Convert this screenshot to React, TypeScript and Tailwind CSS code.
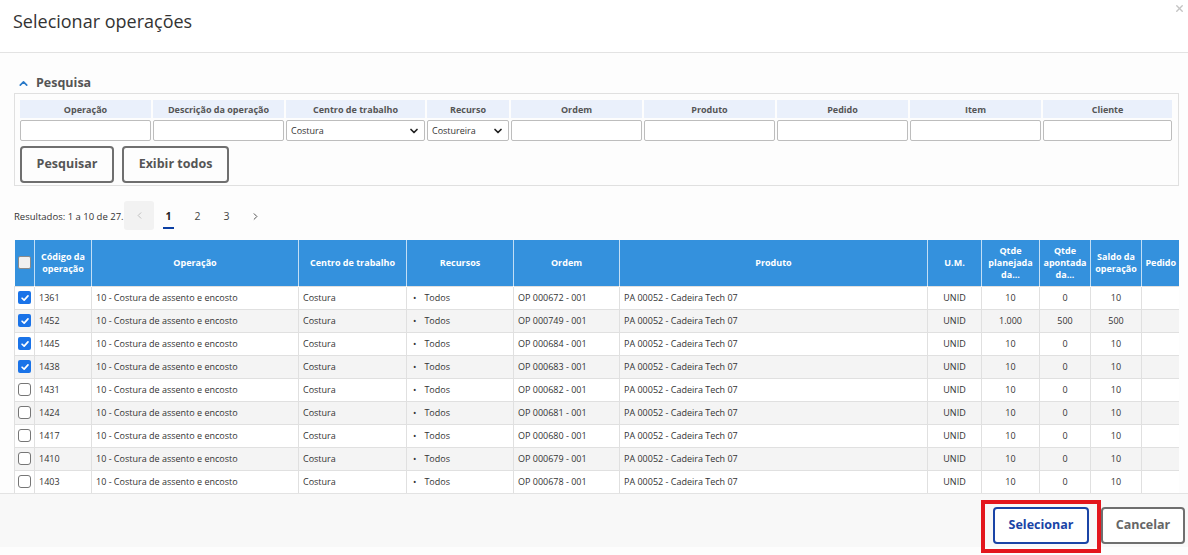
import { ChevronDown, ChevronUp, ChevronLeft, ChevronRight, X } from "lucide-react";

type Row = {
  code: string;
  order: string;
  planned: string;
  done: string;
  balance: string;
  checked: boolean;
};

const rows: Row[] = [
  { code: "1361", order: "OP 000672 - 001", planned: "10", done: "0", balance: "10", checked: true },
  { code: "1452", order: "OP 000749 - 001", planned: "1.000", done: "500", balance: "500", checked: true },
  { code: "1445", order: "OP 000684 - 001", planned: "10", done: "0", balance: "10", checked: true },
  { code: "1438", order: "OP 000683 - 001", planned: "10", done: "0", balance: "10", checked: true },
  { code: "1431", order: "OP 000682 - 001", planned: "10", done: "0", balance: "10", checked: false },
  { code: "1424", order: "OP 000681 - 001", planned: "10", done: "0", balance: "10", checked: false },
  { code: "1417", order: "OP 000680 - 001", planned: "10", done: "0", balance: "10", checked: false },
  { code: "1410", order: "OP 000679 - 001", planned: "10", done: "0", balance: "10", checked: false },
  { code: "1403", order: "OP 000678 - 001", planned: "10", done: "0", balance: "10", checked: false },
];

const filters: { label: string; width: string; select?: string }[] = [
  { label: "Operação", width: "w-[131px]" },
  { label: "Descrição da operação", width: "w-[131px]" },
  { label: "Centro de trabalho", width: "w-[139px]", select: "Costura" },
  { label: "Recurso", width: "w-[82px]", select: "Costureira" },
  { label: "Ordem", width: "w-[131px]" },
  { label: "Produto", width: "w-[131px]" },
  { label: "Pedido", width: "w-[131px]" },
  { label: "Item", width: "w-[131px]" },
  { label: "Cliente", width: "w-[129px]" },
];

const colWidths = [20, 57, 207, 108, 107, 106, 308, 54, 58, 51, 51, 38];

function Checkbox({ checked }: { checked: boolean }) {
  return checked ? (
    <span className="flex h-[13px] w-[13px] items-center justify-center rounded-[2px] bg-[#1a73e8]">
      <svg viewBox="0 0 12 12" className="h-[10px] w-[10px]" fill="none" stroke="white" strokeWidth="2" strokeLinecap="round" strokeLinejoin="round">
        <path d="M2.5 6.3 L5 8.6 L9.6 3.4" />
      </svg>
    </span>
  ) : (
    <span className="block h-[13px] w-[13px] rounded-[3px] border border-[#767676] bg-white" />
  );
}

export default function App() {
  return (
    <div className="relative flex h-[555px] w-[1188px] flex-col overflow-hidden bg-[#fdfdfd] text-[#333]" style={{ fontFamily: '"Open Sans", "Noto Sans", sans-serif' }}>
      {/* Header */}
      <div className="h-[53px] shrink-0 border-b border-[#e3e3e3] bg-white px-[13px] pt-[7px]">
        <h1 className="text-[18px] leading-[28px] text-[#333]">Selecionar operações</h1>
      </div>
      <button className="absolute right-[3px] top-[3px] text-[#c4c4c4]">
        <X size={11} strokeWidth={3} />
      </button>

      <div className="flex min-h-0 flex-1 flex-col pl-[14px] pr-[9px]">
        {/* Pesquisa */}
        <div className="flex items-center gap-[6px] pl-[3px] pt-[22px]">
          <ChevronUp size={13} strokeWidth={3} className="text-[#2979c8]" />
          <span className="text-[12.5px] font-bold leading-[16px] text-[#555]">Pesquisa</span>
        </div>
        <div className="mt-[2px] h-[93px] border border-[#e0e0e0] px-[5px] pt-[6px]">
          <div className="flex gap-[2px]">
            {filters.map((f) => (
              <div key={f.label} className={`${f.width} flex shrink-0 flex-col gap-[2px]`}>
                <div className="h-[18px] bg-[#eaf0fb] text-center text-[9px] font-bold leading-[20px] text-[#555]">{f.label}</div>
                {f.select ? (
                  <div className="flex h-[21px] items-center justify-between rounded-[2px] border border-[#bdbdbd] bg-white pl-[4px] pr-[4px] text-[9px] text-[#333]">
                    <span>{f.select}</span>
                    <ChevronDown size={12} strokeWidth={3.5} className="text-[#222]" />
                  </div>
                ) : (
                  <div className="h-[21px] rounded-[2px] border border-[#bdbdbd] bg-white" />
                )}
              </div>
            ))}
          </div>
          <div className="mt-[5px] flex gap-[8px]">
            <button className="h-[37px] w-[94px] rounded-[4px] border-2 border-[#6f6f6f] bg-[#fdfdfd] text-[12.5px] font-bold text-[#555]">Pesquisar</button>
            <button className="h-[37px] w-[107px] rounded-[4px] border-2 border-[#6f6f6f] bg-[#fdfdfd] text-[12.5px] font-bold text-[#555]">Exibir todos</button>
          </div>
        </div>

        {/* Results + pagination */}
        <div className="mt-[15px] flex h-[29px] items-center">
          <span className="w-[110px] whitespace-nowrap text-[9.5px] leading-[14px] text-[#333] translate-y-[1px]">Resultados: 1 a 10 de 27.</span>
          <div className="flex h-[29px] w-[30px] items-center justify-center rounded-[3px] bg-[#f2f2f2] text-[#bbb]">
            <ChevronLeft size={11} strokeWidth={2} />
          </div>
          <div className="relative flex w-[29px] translate-y-[1px] justify-center text-[10.5px] font-bold text-[#222]">
            1
            <span className="absolute left-[9px] top-[18px] h-[2px] w-[11px] bg-[#0b3fa3]" />
          </div>
          <div className="flex w-[29px] translate-y-[1px] justify-center text-[10.5px] text-[#444]">2</div>
          <div className="flex w-[29px] translate-y-[1px] justify-center text-[10.5px] text-[#444]">3</div>
          <div className="flex w-[29px] translate-y-[1px] justify-center text-[#444]">
            <ChevronRight size={11} strokeWidth={2} />
          </div>
        </div>

        {/* Table */}
        <div className="mt-[10px] h-[253px] overflow-hidden">
          <table className="w-[1165px] table-fixed border-collapse text-[9px]">
            <colgroup>
              {colWidths.map((w, i) => (
                <col key={i} style={{ width: w }} />
              ))}
            </colgroup>
            <thead>
              <tr className="h-[46px] bg-[#3491dd] font-bold leading-[12px] text-white">
                <th className="border-r border-white/70 pl-[3px] text-left">
                  <span className="block h-[13px] w-[13px] rounded-[2px] border border-[#8a8a8a] bg-[#f0f0f0]" />
                </th>
                <th className="border-r border-white/70 px-[2px]">Código da operação</th>
                <th className="border-r border-white/70">Operação</th>
                <th className="border-r border-white/70">Centro de trabalho</th>
                <th className="border-r border-white/70">Recursos</th>
                <th className="border-r border-white/70">Ordem</th>
                <th className="border-r border-white/70">Produto</th>
                <th className="border-r border-white/70">U.M.</th>
                <th className="border-r border-white/70 px-[2px]">Qtde planejada da...</th>
                <th className="border-r border-white/70 px-[1px]">Qtde apontada da...</th>
                <th className="border-r border-white/70 px-[1px]">Saldo da operação</th>
                <th>Pedido</th>
              </tr>
            </thead>
            <tbody>
              {rows.map((r, i) => (
                <tr key={r.code} className={`h-[23px] ${i % 2 === 1 ? "bg-[#f4f4f4]" : "bg-white"}`}>
                  <td className="border border-[#e0e0e0] pl-[3px]">
                    <Checkbox checked={r.checked} />
                  </td>
                  <td className="border border-[#e0e0e0] px-[4px]">{r.code}</td>
                  <td className="border border-[#e0e0e0] px-[4px]">10 - Costura de assento e encosto</td>
                  <td className="border border-[#e0e0e0] px-[4px]">Costura</td>
                  <td className="border border-[#e0e0e0] pl-[6px]">
                    <span className="mr-[8px]">•</span>Todos
                  </td>
                  <td className="border border-[#e0e0e0] px-[4px]">{r.order}</td>
                  <td className="border border-[#e0e0e0] px-[4px]">PA 00052 - Cadeira Tech 07</td>
                  <td className="border border-[#e0e0e0] text-center">UNID</td>
                  <td className="border border-[#e0e0e0] text-center">{r.planned}</td>
                  <td className="border border-[#e0e0e0] text-center">{r.done}</td>
                  <td className="border border-[#e0e0e0] text-center">{r.balance}</td>
                  <td className="border border-[#e0e0e0]" />
                </tr>
              ))}
            </tbody>
          </table>
        </div>
      </div>

      {/* Footer */}
      <div className="mb-[8px] flex h-[54px] shrink-0 items-start justify-end gap-[12px] border-t border-[#e3e3e3] bg-[#f8f8f8] pr-[3px] pt-[13px]">
        <button className="h-[37px] w-[96px] rounded-[4px] border-2 border-[#1a44a6] bg-white text-[12.5px] font-bold text-[#1a44a6]">Selecionar</button>
        <button className="h-[37px] w-[84px] rounded-[4px] border-2 border-[#6f6f6f] bg-white text-[12.5px] font-bold text-[#666]">Cancelar</button>
      </div>
      {/* highlight annotation */}
      <div className="pointer-events-none absolute left-[981px] top-[500px] h-[53px] w-[120px] border-[4px] border-[#e3161d]" />
    </div>
  );
}
